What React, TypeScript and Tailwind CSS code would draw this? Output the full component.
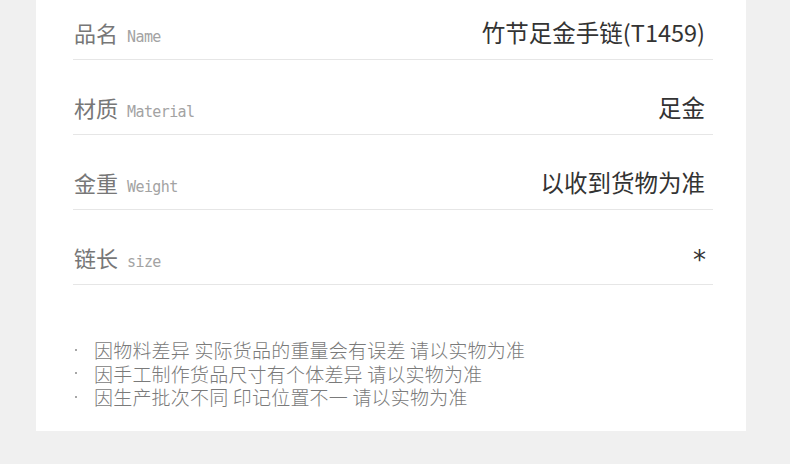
const cjk = "font-['Noto_Sans_CJK_SC','Noto_Sans',sans-serif]";

const rows = [
  { cn: "品名", en: "Name", value: "竹节足金手链(T1459)" },
  { cn: "材质", en: "Material", value: "足金" },
  { cn: "金重", en: "Weight", value: "以收到货物为准" },
  { cn: "链长", en: "size", value: "*" },
];

const notes = [
  "因物料差异 实际货品的重量会有误差 请以实物为准",
  "因手工制作货品尺寸有个体差异 请以实物为准",
  "因生产批次不同 印记位置不一 请以实物为准",
];

export default function App() {
  return (
    <div className={`w-[790px] h-[464px] bg-[#f0f0f0] ${cjk}`}>
      <div className="ml-[36px] w-[710px] h-[431px] bg-white pl-[37px] pr-[33px]">
        <div className="flex flex-col">
          {rows.map((r, i) => (
            <div
              key={r.cn}
              className={`flex items-end justify-between border-b border-[#e6e6e6] pb-[11px] ${
                i === 0 ? "h-[60px]" : "h-[75px]"
              }`}
            >
              <div className="flex items-baseline gap-[9px] pl-[1px]">
                <span className="text-[22px] leading-[22px] text-[#777777]">{r.cn}</span>
                <span className="font-['DejaVu_Sans_Mono',monospace] text-[15px] tracking-[-0.6px] text-[#a3a3a3]">
                  {r.en}
                </span>
              </div>
              {r.value === "*" ? (
                <span className="mb-[2px] pr-[7px] font-['DejaVu_Sans',sans-serif] text-[26px] leading-[22px] text-[#333333]">
                  *
                </span>
              ) : (
                <span className="mb-[5px] pr-[8px] text-[23.5px] leading-[22px] text-[#333333]">
                  {r.value}
                </span>
              )}
            </div>
          ))}
        </div>

        <ul className="mt-[53px] flex flex-col">
          {notes.map((n) => (
            <li key={n} className="flex items-center text-[19px] leading-[23.5px] font-light tracking-[0.2px] text-[#7a7a7a]">
              <span className="flex w-[21px] pl-[2px]">
                <span className="h-[2px] w-[2px] rounded-full bg-[#8a8a8a]" />
              </span>
              <span>{n}</span>
            </li>
          ))}
        </ul>
      </div>
    </div>
  );
}
